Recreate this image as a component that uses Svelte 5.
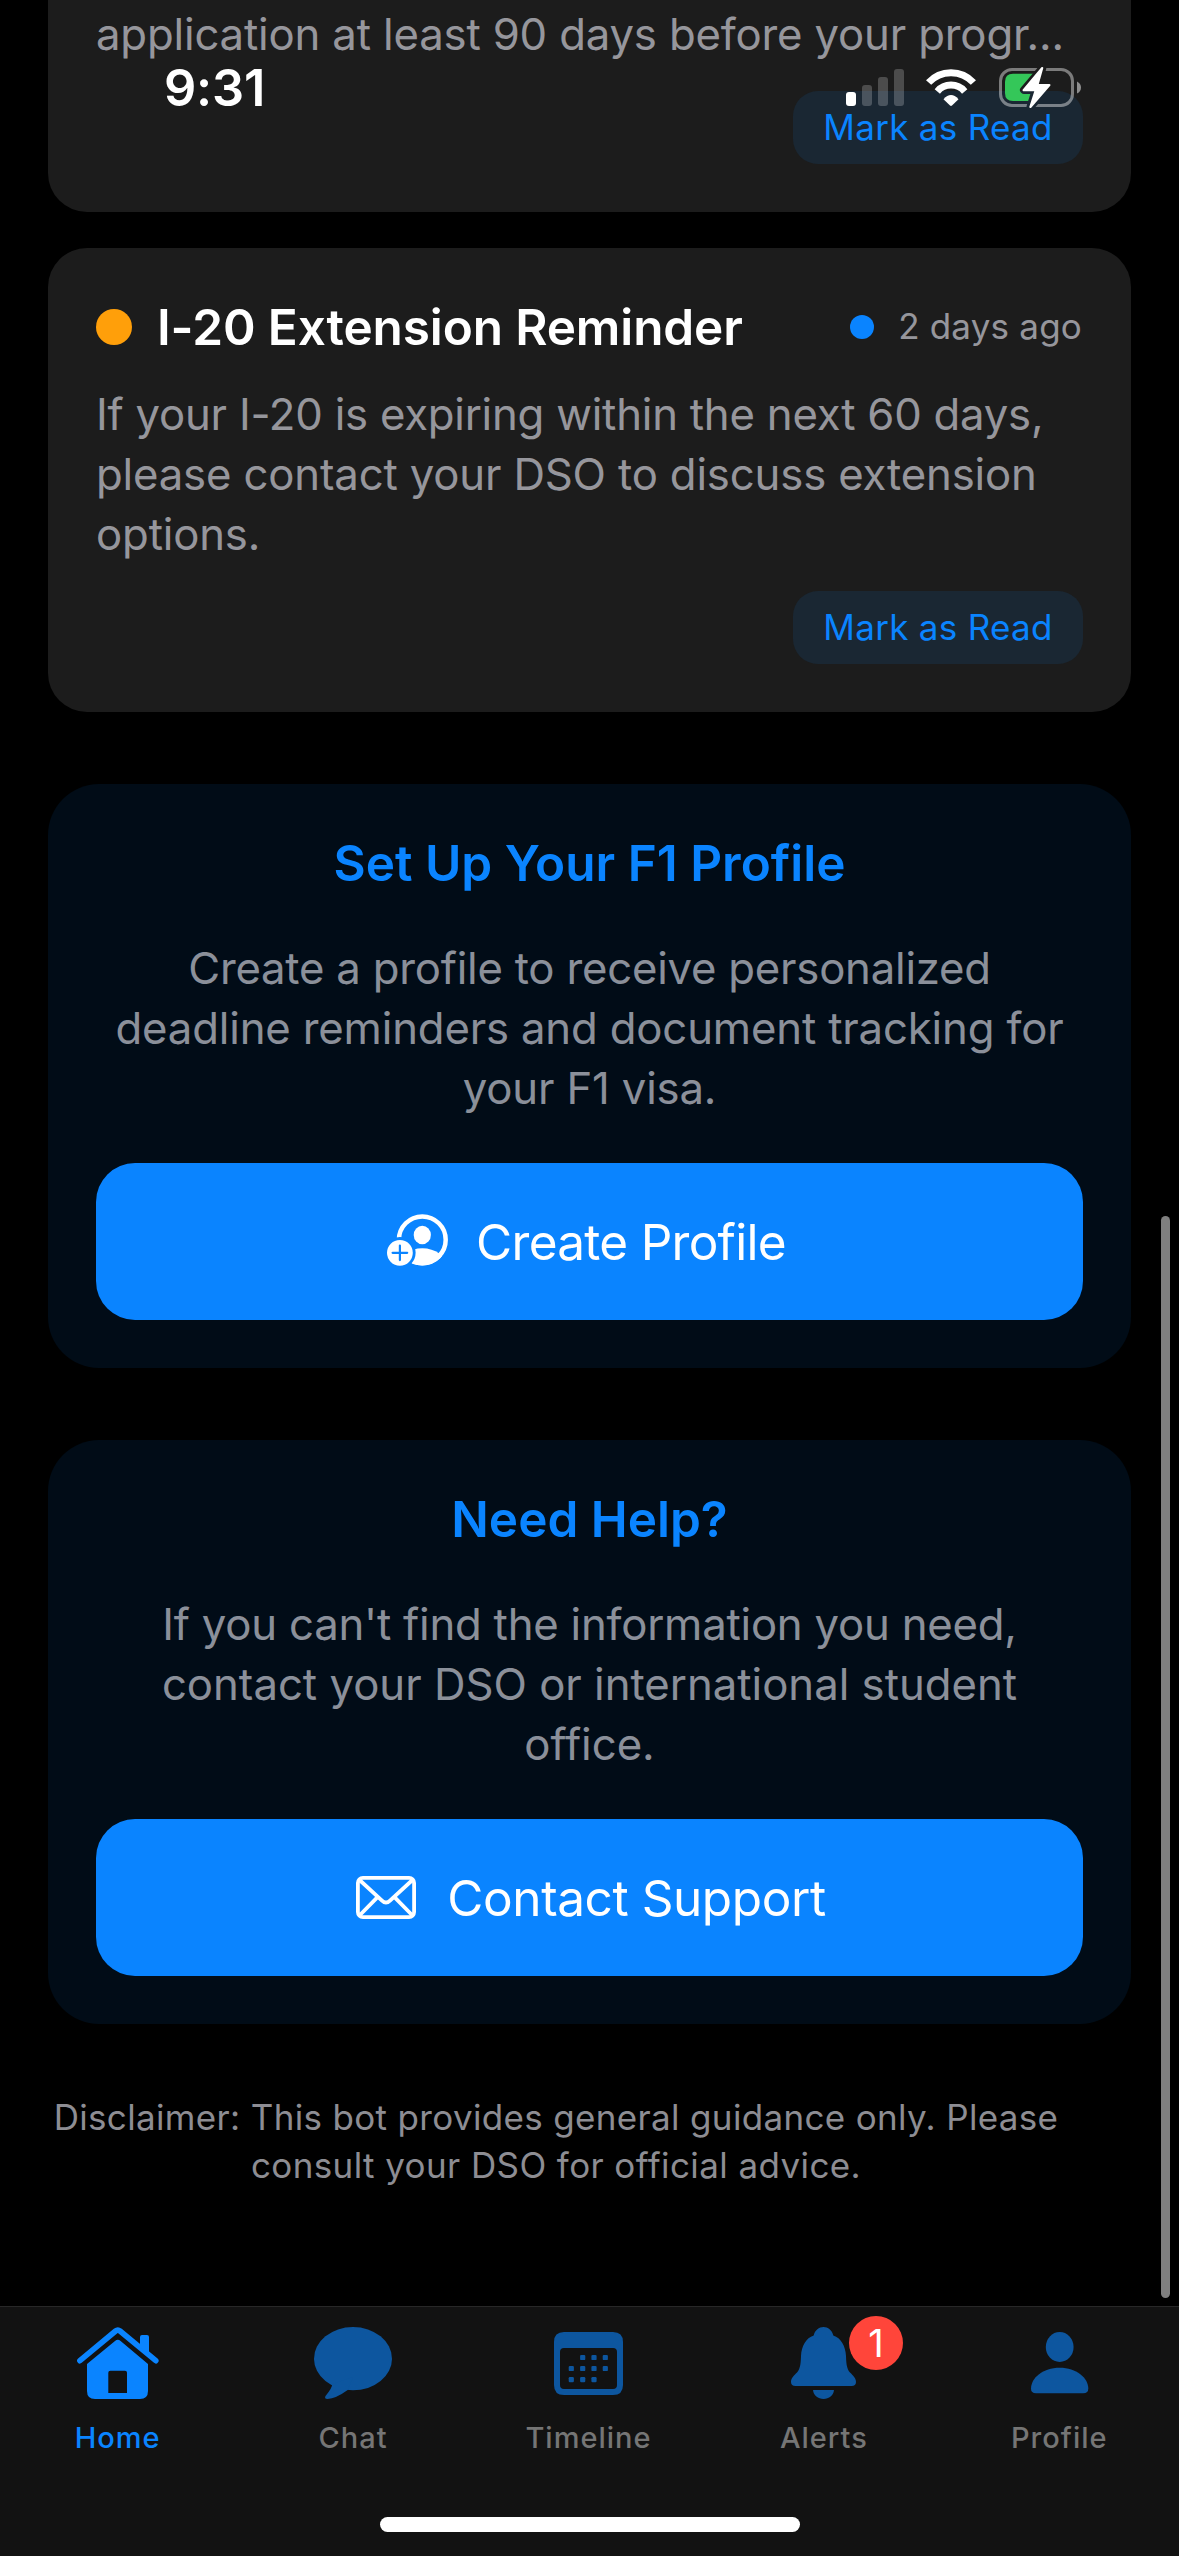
<script>
  const tabs = [
    { name: 'Home', active: true },
    { name: 'Chat' },
    { name: 'Timeline' },
    { name: 'Alerts', badge: 1 },
    { name: 'Profile' }
  ];

  const calendarDots = [
    [28.7, 25.5], [40, 25.5], [51.3, 25.5],
    [17.3, 36.5], [28.7, 36.5], [40, 36.5], [51.3, 36.5],
    [17.3, 47.7], [28.7, 47.7], [40, 47.7]
  ];
</script>

<div class="screen">
  <header class="status">
    <span class="clock">9:31</span>
    <div class="indicators">
      <svg class="signal" width="58" height="37" viewBox="0 0 58 37">
        <rect x="0" y="23" width="10" height="14" rx="3" fill="#fff" />
        <rect x="16" y="16" width="10" height="21" rx="3" fill="#fff" opacity=".21" />
        <rect x="32" y="8" width="10" height="29" rx="3" fill="#fff" opacity=".21" />
        <rect x="48" y="0" width="10" height="37" rx="3" fill="#fff" opacity=".21" />
      </svg>
      <svg class="wifi" width="50" height="38" viewBox="0 0 50 38">
        <path d="M2.6 13.5A30.4 30.4 0 0 1 47.4 13.5" fill="none" stroke="#fff" stroke-width="7" />
        <path d="M11.3 22.4A18 18 0 0 1 38.7 22.4" fill="none" stroke="#fff" stroke-width="7" />
        <path d="M17.5 30.2Q25 22 32.5 30.2L26 36.6Q25 37.4 24 36.6Z" fill="#fff" />
      </svg>
      <svg class="battery" width="82" height="41" viewBox="0 0 82 41">
        <mask id="bolt-gap">
          <rect width="82" height="41" fill="#fff" />
          <path d="M43.2 1.5L25 23H36.8L31.6 39.5L50 18.4H38.4Z" fill="#000" stroke="#000" stroke-width="8" stroke-linejoin="round" />
        </mask>
        <g mask="url(#bolt-gap)">
          <rect x="1.5" y="2.5" width="72" height="36" rx="11.5" fill="none" stroke="#fff" stroke-opacity=".42" stroke-width="3" />
          <path d="M14 6.8H34V34H14Q6 34 6 26V14.8Q6 6.8 14 6.8Z" fill="#34c759" />
        </g>
        <path d="M78 14.4Q82 16.5 82 20.5T78 26.5Z" fill="#fff" opacity=".5" />
        <path d="M43.2 1L24.6 23.2H36.8L31.4 40L50.4 18H38.4Z" fill="#fff" stroke="#fff" stroke-width="2.2" stroke-linejoin="round" />
      </svg>
    </div>
  </header>

  <main>
    <article class="alert clipped">
      <p class="body">application at least 90 days before your progr...</p>
      <button class="mark">Mark as Read</button>
    </article>

    <article class="alert">
      <div class="heading">
        <i class="priority"></i>
        <h2>I-20 Extension Reminder</h2>
        <i class="unread"></i>
        <time>2 days ago</time>
      </div>
      <p class="body">
        <span class="tight">If your I-20 is expiring within the next 60 days,</span><br />
        please contact your DSO to discuss extension<br />
        options.
      </p>
      <button class="mark">Mark as Read</button>
    </article>

    <section class="promo">
      <h2>Set Up Your F1 Profile</h2>
      <p class="body">
        <span class="tight">Create a profile to receive personalized</span><br />
        deadline reminders and document tracking for<br />
        your F1 visa.
      </p>
      <button class="action create">
        <svg width="61" height="52" viewBox="0 0 61 52">
          <mask id="badge-gap">
            <rect width="62" height="53" fill="#fff" />
            <circle cx="12.9" cy="38.8" r="15.7" fill="#000" />
          </mask>
          <clipPath id="avatar"><circle cx="35.3" cy="25.8" r="25.6" /></clipPath>
          <g mask="url(#badge-gap)">
            <circle cx="35.3" cy="25.8" r="23.4" fill="none" stroke="#fff" stroke-width="4.5" />
            <ellipse cx="35.3" cy="51.8" rx="24" ry="17.5" fill="#fff" clip-path="url(#avatar)" />
          </g>
          <ellipse cx="35.3" cy="21" rx="8.6" ry="9.3" fill="#fff" />
          <circle cx="12.9" cy="38.8" r="12.9" fill="#fff" />
          <path d="M12.9 31.5V46.1M5.6 38.8H20.2" stroke="#0a84ff" stroke-width="2.2" stroke-linecap="round" />
        </svg>
        <span>Create Profile</span>
      </button>
    </section>

    <section class="promo">
      <h2>Need Help?</h2>
      <p class="body">
        <span class="tight">If you can't find the information you need,</span><br />
        <span class="loose">contact your DSO or international student</span><br />
        <span class="loose">office.</span>
      </p>
      <button class="action contact">
        <svg width="60" height="43" viewBox="0 0 60 43" fill="none" stroke="#fff" stroke-width="3.8">
          <rect x="1.9" y="1.9" width="56.2" height="39.2" rx="5" />
          <path d="M3 3.5L26 24.6Q30 28.4 34 24.6L57 3.5M3 40L21.3 21.4M57 40L38.7 21.4" />
        </svg>
        <span>Contact Support</span>
      </button>
    </section>

    <p class="disclaimer">
      <span>Disclaimer: This bot provides general guidance only. Please</span><br />
      consult your DSO for official advice.
    </p>
  </main>

  <div class="scrollbar"></div>

  <footer>
    <nav>
      {#each tabs as tab}
        <a class="tab" class:active={tab.active} href="#{tab.name}">
          <span class="icon">
            {#if tab.name === 'Home'}
              <svg width="82" height="72" viewBox="0 0 82 72">
                <path d="M2.9 33.7L38.6 4Q40.8 2.2 43 4L78.8 33.7" fill="none" stroke="currentColor" stroke-width="5.6" stroke-linecap="round" />
                <path d="M63 10Q63 8 65 8H70Q72 8 72 10V27L63 20Z" fill="currentColor" />
                <path fill-rule="evenodd" fill="currentColor" d="M38 14Q40.8 11.6 43.6 14L71 37V64Q71 72 63 72H18Q10 72 10 64V37ZM33.3 43.7H48Q50 43.7 50 45.7V66H31.3V45.7Q31.3 43.7 33.3 43.7Z" />
              </svg>
            {:else if tab.name === 'Chat'}
              <svg width="78" height="72" viewBox="0 0 78 72" fill="currentColor">
                <ellipse cx="39" cy="31.7" rx="39" ry="31.6" />
                <path d="M18.2 57Q18.5 60.5 11.5 69Q10 72 13.5 72Q22 71.5 33.7 63L39 50Z" />
              </svg>
            {:else if tab.name === 'Timeline'}
              <svg width="69" height="63" viewBox="0 0 69 63" fill="currentColor">
                <path fill-rule="evenodd" d="M10 0H59Q69 0 69 10V53Q69 63 59 63H10Q0 63 0 53V10Q0 0 10 0ZM10 16Q6 16 6 20V53Q6 57 10 57H59Q63 57 63 53V20Q63 16 59 16Z" />
                {#each calendarDots as [cx, cy]}
                  <rect x={cx - 2.6} y={cy - 2.6} width="5.2" height="5.2" rx="1.2" />
                {/each}
              </svg>
            {:else if tab.name === 'Alerts'}
              <svg width="65" height="72" viewBox="0 0 65 72" fill="currentColor">
                <path d="M22.7 8.5C24 3 28 0 32.5 0S41 3 42.3 8.5C50 11 54.5 19 55 29C55.3 38 56 42 59 45.5C62 48.5 65 51 65 55Q65 59 60.5 59H4.5Q0 59 0 55C0 51 3 48.5 6 45.5C9 42 9.7 38 10 29C10.5 19 15 11 22.7 8.5Z" />
                <path d="M22 63H43C42.5 68.5 38 72 32.5 72S22.5 68.5 22 63Z" />
              </svg>
            {:else}
              <svg width="57.4" height="61.4" viewBox="0 0 57.4 61.4" fill="currentColor">
                <ellipse cx="28.7" cy="15" rx="13.9" ry="15" />
                <path d="M5 61.3Q0 61.3 0 56.5C0 46 12 35.7 28.7 35.7S57.3 46 57.3 56.5Q57.3 61.3 52.3 61.3Z" />
              </svg>
            {/if}
          </span>
          <span class="label">{tab.name}</span>
          {#if tab.badge}<span class="badge">{tab.badge}</span>{/if}
        </a>
      {/each}
    </nav>
    <div class="home-bar"></div>
  </footer>
</div>

<style>
  :global(body) { background: #000; }

  .screen {
    position: relative;
    display: flex;
    flex-direction: column;
    width: 1179px;
    height: 2556px;
    overflow: hidden;
    background: #000;
    color: #fff;
    font-family: Inter, "Liberation Sans", sans-serif;
  }

  h2, p { margin: 0; font-weight: 400; }
  button { border: 0; padding: 0; font: inherit; color: inherit; }
  svg { display: block; flex: none; overflow: visible; }

  /* Status bar floats over the scrolled content */
  .status {
    position: absolute;
    z-index: 2;
    top: 57px;
    left: 0;
    right: 0;
    height: 62px;
    display: flex;
    justify-content: space-between;
    padding: 0 98px 0 164px;
  }
  .clock {
    font-size: 50.5px;
    font-weight: 600;
    line-height: 62px;
    letter-spacing: -.2px;
  }
  .indicators { display: flex; }
  .signal { margin-top: 12px; }
  .wifi { margin: 12px 23px 0 22px; }
  .battery { margin-top: 10px; }

  main {
    flex: 1;
    min-height: 0;
    overflow: hidden;
    padding: 0 48px;
    display: flex;
    flex-direction: column;
  }

  .alert {
    display: flex;
    flex-direction: column;
    flex: none;
    padding: 48px;
    margin-bottom: 36px;
    border-radius: 39px;
    background: #1c1c1c;
  }
  .alert + .promo { margin-top: 36px; }
  .clipped {
    padding-top: 5px;
    border-top-left-radius: 0;
    border-top-right-radius: 0;
  }

  .body {
    font-size: 43.7px;
    line-height: 60px;
    letter-spacing: -.16px;
    color: rgba(235, 235, 245, .6);
    white-space: nowrap;
  }
  .tight { letter-spacing: -.22px; }
  .loose { letter-spacing: 0; }

  .heading {
    display: flex;
    align-items: center;
    height: 62px;
    margin-bottom: 27px;
  }
  .heading h2 {
    flex: 1;
    font-size: 49.5px;
    font-weight: 600;
    line-height: 62px;
    letter-spacing: -.12px;
  }
  .priority {
    width: 36px;
    height: 36px;
    margin-right: 25px;
    border-radius: 50%;
    background: #ff9f0a;
  }
  .unread {
    width: 24px;
    height: 24px;
    margin-right: 24px;
    border-radius: 50%;
    background: #0a84ff;
  }
  time {
    margin-right: 1px;
    padding-bottom: 2px;
    font-size: 35px;
    letter-spacing: .2px;
    color: rgba(235, 235, 245, .6);
  }

  .mark {
    align-self: flex-end;
    width: 290px;
    height: 73px;
    margin-top: 26px;
    padding-bottom: 2px;
    border-radius: 25px;
    background: #1a2733;
    color: #0a84ff;
    font-size: 35px;
    letter-spacing: .3px;
  }

  .promo {
    display: flex;
    flex-direction: column;
    flex: none;
    height: 584px;
    box-sizing: border-box;
    padding: 48px;
    margin-bottom: 72px;
    border-radius: 51px;
    background: #010c17;
    text-align: center;
  }
  .promo h2 {
    font-size: 49.5px;
    font-weight: 600;
    line-height: 62px;
    margin-bottom: 45px;
    color: #0a84ff;
  }
  .action {
    display: flex;
    align-items: center;
    justify-content: center;
    height: 157px;
    margin-top: 44px;
    border-radius: 39px;
    background: #0a84ff;
    font-size: 49.5px;
  }
  .create { gap: 28px; padding-right: 6px; letter-spacing: -.72px; }
  .create svg { margin-bottom: 3px; }
  .contact { gap: 31px; padding-left: 3px; letter-spacing: -.42px; }

  .disclaimer {
    width: 1016px;
    margin-top: -3px;
    text-align: center;
    font-size: 35px;
    line-height: 48px;
    letter-spacing: .4px;
    color: #8d8d93;
    white-space: nowrap;
  }
  .disclaimer span { letter-spacing: .34px; }

  .scrollbar {
    position: absolute;
    top: 1216px;
    right: 9px;
    width: 9px;
    height: 1082px;
    border-radius: 5px;
    background: #7f7f7f;
  }

  footer {
    flex: none;
    display: flex;
    flex-direction: column;
    align-items: center;
    justify-content: space-between;
    height: 250px;
    box-sizing: border-box;
    padding-bottom: 24px;
    border-top: 1px solid #272727;
    background: #121212;
  }
  nav {
    align-self: stretch;
    display: grid;
    grid-template-columns: repeat(5, 1fr);
    padding: 20px 2px 0 0;
  }
  .tab {
    position: relative;
    display: flex;
    flex-direction: column;
    align-items: center;
    gap: 21px;
    color: #0d569f;
    text-decoration: none;
  }
  .icon {
    display: flex;
    align-items: center;
    height: 72px;
  }
  .label {
    font-size: 29px;
    font-weight: 450;
    line-height: 36px;
    letter-spacing: 1px;
    color: #757575;
  }
  .active, .active .label { color: #0a84ff; }
  .badge {
    position: absolute;
    top: -11px;
    left: calc(50% + 25px);
    width: 54px;
    height: 54px;
    border-radius: 50%;
    background: #ff453a;
    color: #fff;
    font-size: 38px;
    line-height: 54px;
    text-align: center;
  }
  .home-bar {
    width: 420px;
    height: 15px;
    border-radius: 8px;
    background: #fff;
  }
</style>
